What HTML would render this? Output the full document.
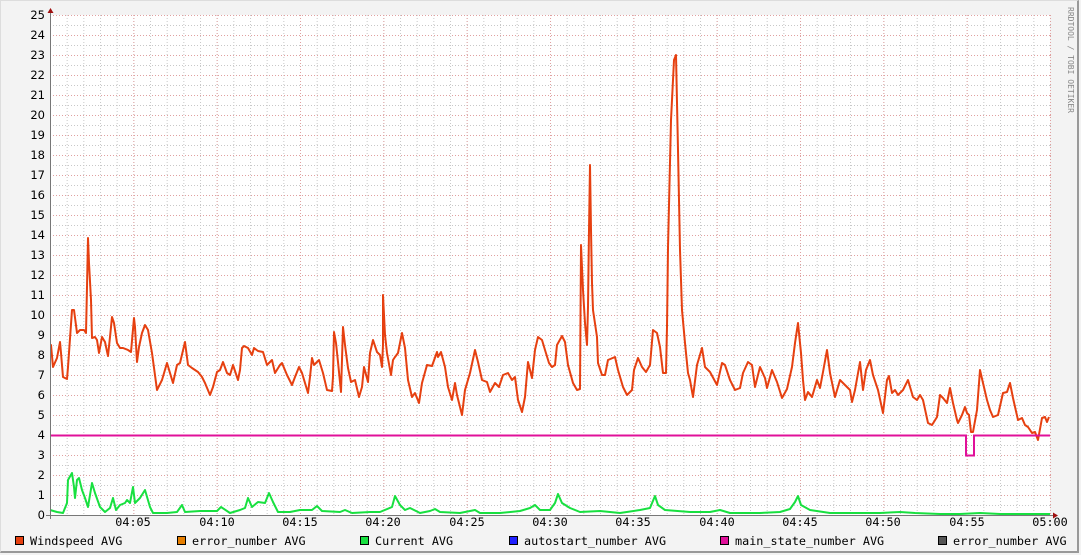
<!DOCTYPE html>
<html><head><style>
html,body{margin:0;padding:0;}
body{width:1081px;height:555px;background:#f3f3f3;position:relative;overflow:hidden;font-family:"DejaVu Sans Mono","Liberation Mono",monospace;font-size:11px;color:#000;}
.frame{position:absolute;left:0;top:0;width:1079px;height:553px;border-right:2px solid #999;border-bottom:2px solid #999;border-left:1px solid #ddd;border-top:1px solid #ddd;box-sizing:border-box;}
</style></head><body>
<div class="frame"></div>
<svg width="1081" height="555" style="position:absolute;left:0;top:0" xmlns="http://www.w3.org/2000/svg">
<defs>
<pattern id="hmin" x="50" y="15" width="1000" height="10" patternUnits="userSpaceOnUse"><line x1="0" y1="0.5" x2="1000" y2="0.5" stroke="#c8c8c8" stroke-dasharray="1,2"/></pattern>
<pattern id="hmaj" x="50" y="15" width="1000" height="20" patternUnits="userSpaceOnUse"><line x1="0" y1="0.5" x2="1000" y2="0.5" stroke="#e0a0a0" stroke-dasharray="1,2"/></pattern>
<pattern id="vmin" x="50" y="15" width="16.6667" height="500" patternUnits="userSpaceOnUse"><line x1="0.5" y1="0" x2="0.5" y2="500" stroke="#c8c8c8" stroke-dasharray="1,2"/></pattern>
<pattern id="vmaj" x="50" y="15" width="83.333" height="500" patternUnits="userSpaceOnUse"><line x1="0.5" y1="0" x2="0.5" y2="500" stroke="#e0a0a0" stroke-dasharray="1,2"/></pattern>
</defs>
<rect x="50" y="15" width="1000" height="500" fill="#fff"/>
<rect x="50" y="15" width="1001" height="500" fill="url(#hmin)"/>
<rect x="50" y="15" width="1001" height="500" fill="url(#vmin)"/>
<rect x="50" y="15" width="1001" height="500" fill="url(#hmaj)"/>
<rect x="50" y="15" width="1001" height="500" fill="url(#vmaj)"/>
<g font-family="DejaVu Sans, Liberation Sans, sans-serif" font-size="11.5" text-anchor="end" fill="#000">
<text x="45" y="19">25</text><text x="45" y="39">24</text><text x="45" y="59">23</text><text x="45" y="79">22</text><text x="45" y="99">21</text><text x="45" y="119">20</text><text x="45" y="139">19</text><text x="45" y="159">18</text><text x="45" y="179">17</text><text x="45" y="199">16</text><text x="45" y="219">15</text><text x="45" y="239">14</text><text x="45" y="259">13</text><text x="45" y="279">12</text><text x="45" y="299">11</text><text x="45" y="319">10</text><text x="45" y="339">9</text><text x="45" y="359">8</text><text x="45" y="379">7</text><text x="45" y="399">6</text><text x="45" y="419">5</text><text x="45" y="439">4</text><text x="45" y="459">3</text><text x="45" y="479">2</text><text x="45" y="499">1</text><text x="45" y="519">0</text>
</g>
<g font-family="DejaVu Sans Mono, Liberation Mono, monospace" font-size="11.8" text-anchor="middle" fill="#000">
<text x="133" y="526">04:05</text><text x="217" y="526">04:10</text><text x="300" y="526">04:15</text><text x="383" y="526">04:20</text><text x="467" y="526">04:25</text><text x="550" y="526">04:30</text><text x="633" y="526">04:35</text><text x="717" y="526">04:40</text><text x="800" y="526">04:45</text><text x="883" y="526">04:50</text><text x="967" y="526">04:55</text><text x="1050" y="526">05:00</text>
</g>
<polyline fill="none" stroke="#e64010" stroke-width="2" stroke-linejoin="round" points="50,345 51,345 53,367 57,358 60,342 61,353 63,377 67,379 68,367 72,310 74,310 77,333 80,330 84,330 86,333 87,287 88,238 89,263 91,300 92,338 95,337 97,340 99,353 102,337 105,342 108,356 110,337 112,317 114,323 117,343 120,348 123,348 128,350 131,352 134,318 135,327 137,362 139,347 142,333 145,325 148,330 152,353 157,390 162,380 167,363 173,383 177,365 180,363 185,342 188,365 192,368 198,372 202,377 205,383 210,395 213,387 217,372 220,370 223,362 227,373 230,375 233,365 238,380 240,370 242,348 244,346 248,348 252,355 254,348 258,351 263,352 267,365 272,360 275,373 280,365 282,363 287,375 292,385 295,377 299,367 302,373 305,383 308,393 310,377 312,358 314,365 319,360 323,373 327,390 332,391 333,377 334,332 336,343 338,362 341,392 343,327 345,345 348,368 351,382 355,380 359,397 362,387 364,367 368,382 370,353 373,340 377,352 380,355 382,367 383,345 383,295 385,335 387,353 391,375 393,360 395,357 398,353 402,333 405,348 408,380 412,397 415,393 419,403 422,383 427,365 432,366 437,352 438,357 441,352 445,367 448,387 452,400 455,383 457,395 462,415 465,390 470,373 475,350 478,362 482,380 487,382 490,392 495,383 499,387 503,375 508,373 512,380 515,377 518,400 522,412 525,397 528,362 532,378 535,350 538,337 542,340 545,350 549,363 552,367 555,365 557,345 562,336 565,342 568,365 573,383 577,390 580,389 581,245 583,290 585,323 587,345 588,307 589,230 590,165 591,230 592,283 593,310 597,337 598,363 602,375 605,375 608,360 615,357 618,370 623,387 627,395 632,390 634,370 638,358 642,367 646,372 650,365 653,330 657,333 660,347 663,373 666,373 667,327 668,248 671,120 674,60 676,55 678,150 680,250 682,310 685,343 688,373 690,380 693,397 697,365 702,348 705,367 710,372 717,385 722,363 725,365 730,380 735,390 740,388 743,373 748,362 752,365 755,387 760,367 765,378 767,388 772,370 777,382 782,398 787,389 792,367 795,343 798,323 801,353 803,380 805,400 808,392 812,397 817,380 820,388 823,372 827,350 830,373 835,397 840,380 845,385 850,390 852,402 855,390 860,362 863,390 866,370 870,360 873,375 878,390 883,413 887,380 889,376 892,393 895,390 898,395 903,390 908,380 913,397 917,400 920,395 923,400 928,423 932,425 937,417 940,395 943,398 947,403 950,388 953,403 957,420 958,423 962,415 965,407 967,413 969,415 971,432 973,432 977,410 980,370 983,383 987,400 990,410 993,417 998,415 1003,393 1007,392 1010,383 1013,398 1018,420 1022,418 1025,425 1028,427 1032,433 1035,432 1038,440 1042,418 1045,417 1047,422 1049,417"/>
<polyline fill="none" stroke="#e0109a" stroke-width="2" points="50,435.5 966,435.5 966,455.5 974,455.5 974,435.5 1050,435.5"/>
<polyline fill="none" stroke="#18e040" stroke-width="2" stroke-linejoin="round" points="50,510 57,512 63,513 67,503 68,480 72,473 74,487 75,498 77,480 79,478 82,490 85,498 88,507 92,483 95,493 100,507 105,512 110,508 113,498 116,510 120,505 125,503 127,500 130,503 133,487 135,503 140,498 145,490 150,507 153,513 167,513 177,512 182,505 185,512 200,511 217,511 221,507 230,513 240,510 245,508 248,498 252,507 258,502 265,503 269,493 273,502 278,512 290,512 300,510 312,510 317,506 322,511 340,512 345,510 352,513 370,512 380,512 392,507 395,496 400,505 405,510 410,508 420,513 430,511 435,509 440,512 460,513 475,510 480,513 500,513 520,511 530,508 535,505 540,510 550,510 555,503 558,494 562,503 570,508 580,512 600,511 620,513 640,510 650,508 655,496 658,505 665,510 690,512 710,512 720,510 730,513 760,513 780,512 790,509 795,502 798,496 801,505 810,510 830,513 860,513 880,513 900,512 915,513 940,514 960,514 980,513 1000,514 1020,514 1050,514"/>
<line x1="50.5" y1="12" x2="50.5" y2="519" stroke="#777" stroke-width="1"/>
<line x1="46" y1="515.5" x2="1054" y2="515.5" stroke="#777" stroke-width="1"/>
<polygon points="47.5,13 53.5,13 50.5,8" fill="#a01010"/>
<polygon points="1053,512.5 1053,518.5 1058,515.5" fill="#a01010"/>
<text x="0" y="0" transform="translate(1068,7) rotate(90)" font-family="DejaVu Sans Mono, Liberation Mono, monospace" font-size="8" fill="#888">RRDTOOL / TOBI OETIKER</text>
<g stroke="#000" stroke-width="1">
<rect x="15.5" y="536.5" width="8" height="8" fill="#e64010"/>
<rect x="177.5" y="536.5" width="8" height="8" fill="#e67e00"/>
<rect x="360.5" y="536.5" width="8" height="8" fill="#18e040"/>
<rect x="509.5" y="536.5" width="8" height="8" fill="#2020ff"/>
<rect x="720.5" y="536.5" width="8" height="8" fill="#e0109a"/>
<rect x="938.5" y="536.5" width="8" height="8" fill="#555"/>
</g>
<g font-family="DejaVu Sans Mono, Liberation Mono, monospace" font-size="11.8" fill="#000">
<text x="30" y="545">Windspeed AVG</text>
<text x="192" y="545">error_number AVG</text>
<text x="375" y="545">Current AVG</text>
<text x="524" y="545">autostart_number AVG</text>
<text x="735" y="545">main_state_number AVG</text>
<text x="953" y="545">error_number AVG</text>
</g>
</svg>
</body></html>
